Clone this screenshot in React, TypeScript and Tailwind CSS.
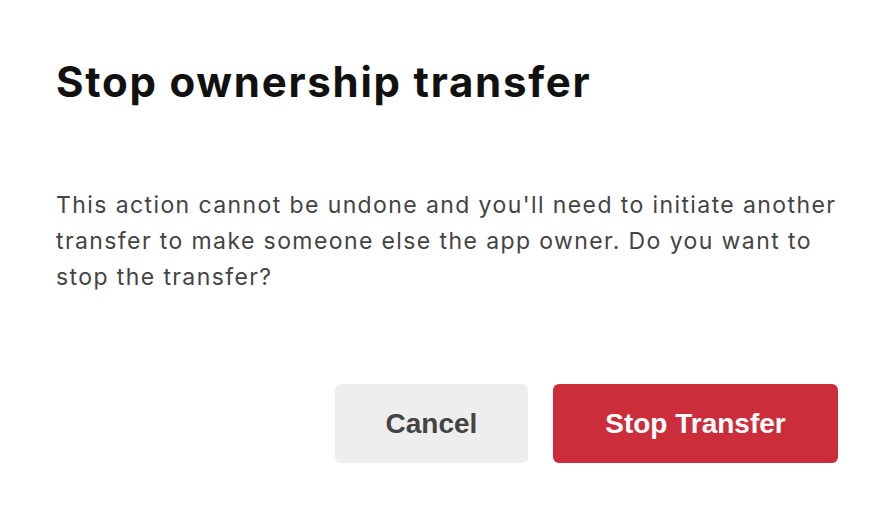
export default function App() {
  return (
    <div className="w-[892px] h-[522px] bg-white px-[56px] pt-[52px] flex flex-col">
      <h1 className="text-[42px] leading-[60px] font-bold tracking-[1.75px] text-[#111111] font-['Inter',sans-serif]">
        Stop ownership transfer
      </h1>
      <p className="mt-[75px] mr-[-24px] text-[23px] leading-[36px] tracking-[1.4px] text-[#444444] font-['Inter',sans-serif]">
        This action cannot be undone and you'll need to initiate another transfer to make someone else the app owner. Do you want to stop the transfer?
      </p>
      <div className="mt-[89px] flex justify-end gap-[25px] mr-[-2px]">
        <button className="w-[193px] h-[79px] rounded-[6px] bg-[#eeeeee] text-[#444444] text-[28px] font-bold font-['Liberation_Sans',sans-serif]">
          Cancel
        </button>
        <button className="w-[285px] h-[79px] rounded-[6px] bg-[#cc2d3b] text-white text-[28px] font-bold font-['Liberation_Sans',sans-serif]">
          Stop Transfer
        </button>
      </div>
    </div>
  )
}
